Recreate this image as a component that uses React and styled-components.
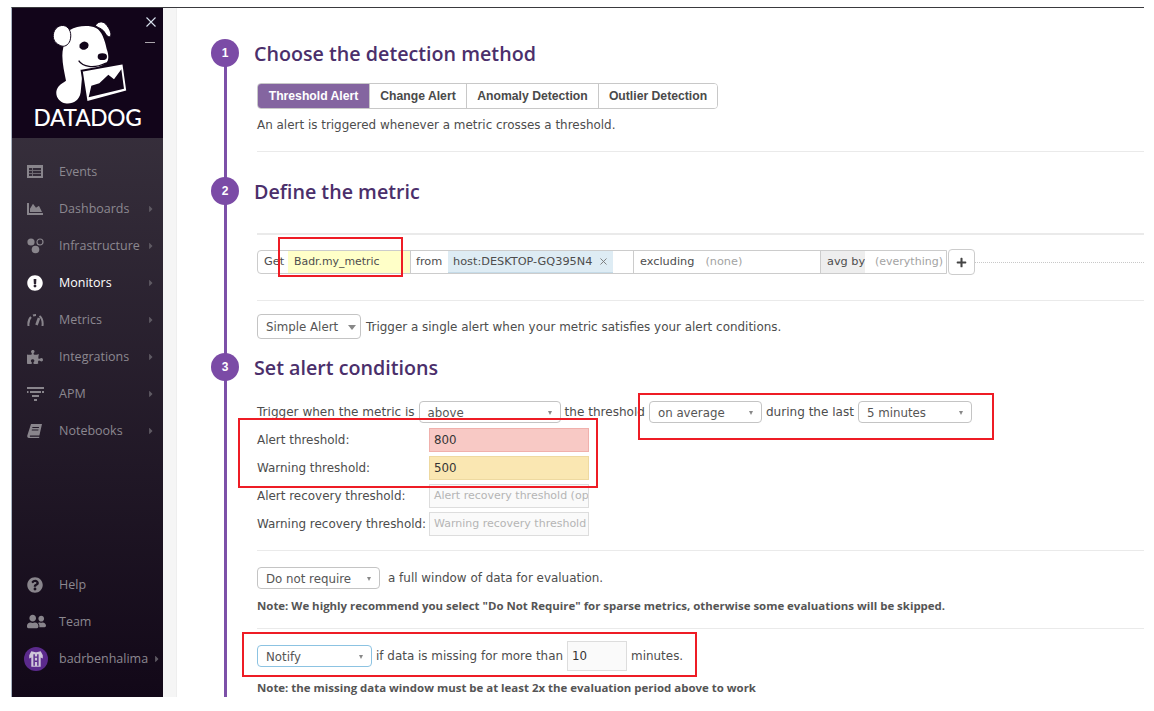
import React from 'react'
import styled, { createGlobalStyle } from 'styled-components'
import { FaChartArea, FaExclamationCircle, FaPuzzlePiece, FaQuestionCircle, FaUserFriends, FaPlus, FaCaretRight } from 'react-icons/fa'
import { X } from 'lucide-react'

const GlobalStyle = createGlobalStyle`
  html, body { margin: 0; padding: 0; background: #fff; }
  * { box-sizing: border-box; }
`

const body = `"DejaVu Sans", sans-serif`
const open = `"Open Sans", sans-serif`

const Page = styled.div`
  position: relative;
  width: 1154px;
  height: 711px;
  overflow: hidden;
  padding: 7px 10px 0 11px;
`
const Frame = styled.div`
  display: flex;
  height: 690px;
  border-top: 1px solid #3a3a3e;
  border-left: 1px solid #a9b4c2;
  overflow: hidden;
`
const Sidebar = styled.aside`
  width: 151px;
  flex: none;
  display: flex;
  flex-direction: column;
  background: linear-gradient(#3e3743, #120818);
  font-family: ${open};
`
const LogoPanel = styled.div`
  position: relative;
  height: 130px;
  flex: none;
  background: #12051a;
  display: flex;
  flex-direction: column;
  align-items: center;
  color: #fff;
`
const LogoArt = styled.svg`
  margin-top: 6px;
  align-self: flex-start;
  margin-left: 28px;
  flex: none;
`
const LogoWord = styled.div`
  font-family: "Lato", sans-serif;
  font-size: 22.7px;
  line-height: 26px;
  letter-spacing: -0.3px;
  font-weight: 500;
  margin-top: 1px;
`
const CloseMark = styled.svg`
  position: absolute;
  left: 134px;
  top: 9px;
`
const MinusLine = styled.span`
  position: absolute;
  left: 133px;
  top: 34px;
  width: 10px;
  height: 1px;
  background: #aaa6ad;
`
const NavList = styled.nav`
  padding-top: 15px;
`
const NavBottom = styled.nav`
  margin-top: auto;
  padding-bottom: 20px;
`
const NavItem = styled.div`
  position: relative;
  height: 37px;
  display: flex;
  align-items: center;
  padding-left: 15px;
  font-size: 12.5px;
  color: ${p => (p.$active ? '#fff' : '#8c8890')};
`
const NavIcon = styled.span`
  width: 32px;
  flex: none;
  display: flex;
  align-items: center;
  color: ${p => (p.$active ? '#fff' : '#89858c')};
  font-size: ${p => p.$size || 16}px;
`
const Caret = styled.span`
  margin-left: auto;
  margin-right: ${p => p.$right || 7}px;
  display: flex;
  color: #5f5a63;
  font-size: 10px;
`
const AvatarWrap = styled.span`
  width: 32px;
  flex: none;
  margin-left: -3px;
  margin-right: 3px;
  display: flex;
`
const Gutter = styled.div`
  width: 14px;
  flex: none;
  background: #f5f5f5;
  border-right: 1px solid #eee;
`
const Main = styled.main`
  position: relative;
  flex: 1;
  min-width: 0;
  padding: 31px 0 0 34px;
  font-family: ${body};
  font-size: 11.95px;
  color: #4d4d4d;
  &::before {
    content: '';
    position: absolute;
    left: 47px;
    top: 45px;
    bottom: 0;
    width: 3px;
    background: #7c50a8;
  }
`
const StepHead = styled.div`
  position: relative;
  display: flex;
  align-items: center;
  height: 28px;
  gap: 15px;
  margin-top: ${p => p.$top || 0}px;
`
const Badge = styled.span`
  width: 28px;
  height: 28px;
  border-radius: 50%;
  background: #7b4ba6;
  color: #fff;
  display: flex;
  align-items: center;
  justify-content: center;
  font: bold 12px "Liberation Sans", sans-serif;
`
const StepTitle = styled.h2`
  margin: 0;
  padding-top: 1px;
  font: 600 19.7px/28px ${open};
  color: #4b2f6b;
`
const Content = styled.div`
  padding-left: 46px;
`
const Tabs = styled.div`
  display: inline-flex;
  height: 26px;
  margin-top: 16px;
  border: 1px solid #c8c8c8;
  border-radius: 4px;
  overflow: hidden;
  vertical-align: top;
`
const Tab = styled.div`
  display: flex;
  align-items: center;
  justify-content: center;
  width: ${p => p.$w}px;
  font: bold 12.2px "Liberation Sans", sans-serif;
  color: ${p => (p.$on ? '#fff' : '#4a4a4a')};
  background: ${p => (p.$on ? '#8465a0' : '#fff')};
  & + & { border-left: 1px solid #c8c8c8; }
`
const Text = styled.div`
  margin-top: ${p => p.$top || 0}px;
  line-height: 18px;
`
const Rule = styled.hr`
  border: 0;
  margin: ${p => p.$top}px 0 0;
  height: ${p => p.$h || 1}px;
  background: #eaeaea;
`
const QueryLine = styled.div`
  display: flex;
  align-items: center;
  margin-top: 14px;
  position: relative;
  &::after {
    content: '';
    flex: 1;
    border-top: 1px dotted #c8c8c8;
  }
`
const Query = styled.div`
  display: flex;
  width: 690px;
  height: 24px;
  flex: none;
  border: 1px solid #ccc;
  border-radius: 4px 0 0 4px;
  line-height: 22px;
  font-size: 11.3px;
`
const Seg = styled.div`
  width: ${p => p.$w}px;
  flex: none;
  padding-left: ${p => p.$pad ?? 6}px;
  background: ${p => p.$bg || 'transparent'};
  color: ${p => p.$muted ? '#a3a3a3' : 'inherit'};
  font-size: ${p => p.$size ? `${p.$size}px` : 'inherit'};
  white-space: nowrap;
  overflow: hidden;
  border-right: ${p => p.$line ? '1px solid #ccc' : '0'};
  display: flex;
  align-items: center;
`
const Pill = styled.div`
  width: 165px;
  flex: none;
  padding: 0 4px 0 5px;
  background: #deecf4;
  border-bottom: 1px solid #c5dbe8;
  display: flex;
  align-items: center;
  justify-content: space-between;
  white-space: nowrap;
  svg { color: #777; }
`
const Muted = styled.span`
  color: #a3a3a3;
  margin-left: ${p => p.$left || 0}px;
`
const Grip = styled.span`
  width: 4px;
  height: 4px;
  flex: none;
  margin-left: 3px;
  background: #ccc;
`
const PlusButton = styled.div`
  width: 27px;
  height: 26px;
  flex: none;
  margin: 0 0 0 1px;
  border: 1px solid #ccc;
  border-radius: 4px;
  color: #444;
  font-size: 11px;
  display: flex;
  align-items: center;
  justify-content: center;
`
const Row = styled.div`
  display: flex;
  align-items: center;
  gap: ${p => p.$gap ?? 4}px;
  margin-top: ${p => p.$top || 0}px;
  font-size: ${p => (p.$size ? `${p.$size}px` : 'inherit')};
  white-space: nowrap;
`
const Select = styled.div`
  width: ${p => p.$w}px;
  height: ${p => p.$h || 22}px;
  flex: none;
  border: 1px solid ${p => (p.$focus ? '#8cc3e2' : '#c4c4c4')};
  border-radius: 4px;
  background: #fff;
  display: flex;
  align-items: center;
  justify-content: space-between;
  padding: 1px ${p => (p.$big ? 4 : 8)}px 0 8px;
  font-size: 11.8px;
  color: #555;
`
const Arrow = styled.span`
  width: 0;
  height: 0;
  border-style: solid;
  border-color: #888 transparent transparent;
  border-width: ${p => (p.$big ? '5px 4.5px 0' : '4px 2.5px 0')};
`
const Thresholds = styled.div`
  display: grid;
  grid-template-columns: 172px 160px;
  grid-auto-rows: 24px;
  row-gap: 4px;
  margin-top: 5px;
  align-items: center;
`
const NumberBox = styled.div`
  height: 24px;
  border: 1px solid ${p => p.$border || '#ddd'};
  background: ${p => p.$bg || '#fafafa'};
  color: ${p => (p.$hint ? '#b5b5b5' : '#333')};
  padding: 0 3px 0 4px;
  line-height: 22px;
  overflow: hidden;
  white-space: nowrap;
  font-size: ${p => (p.$hint ? 11 : 11.8)}px;
`
const SmallNumber = styled(NumberBox)`
  width: 60px;
  height: 30px;
  line-height: 28px;
  flex: none;
`
const Note = styled.div`
  margin-top: ${p => p.$top}px;
  font: bold 11.45px/16px ${open};
  color: #555;
  white-space: nowrap;
`
const Callout = styled.div`
  position: absolute;
  left: ${p => p.$x}px;
  top: ${p => p.$y}px;
  width: ${p => p.$w}px;
  height: ${p => p.$h}px;
  border: 2px solid #ee1c25;
  pointer-events: none;
`

const ink = '#12051a'

const Dog = () => (
  <LogoArt width="125" height="90" viewBox="0 0 375 270" fill="#fff">
    {/* head, neck and paw */}
    <path d="M90 48C110 36 145 32 168 42C185 50 195 80 200 105C206 120 208 140 198 146C190 154 160 168 128 168L122 235C118 262 95 272 75 268C50 262 42 235 55 218C62 208 72 205 78 200C72 170 62 130 70 100C75 78 80 60 90 48z" />
    {/* ears */}
    <path d="M40 62C42 42 60 30 76 36C90 42 96 60 90 80C85 94 72 100 62 95C48 90 38 78 40 62z" stroke={ink} strokeWidth="3" />
    <path d="M166 36C172 22 188 20 197 30C208 42 215 58 212 66C208 72 200 66 196 58C190 46 178 42 166 36z" stroke={ink} strokeWidth="3" />
    {/* eye, nose, mouth */}
    <ellipse cx="132" cy="95" rx="14" ry="12" fill={ink} transform="rotate(-20 132 95)" />
    <ellipse cx="187" cy="128" rx="14" ry="10" fill={ink} />
    <path d="M116 140C128 158 160 166 198 147" fill="none" stroke={ink} strokeWidth="4" />
    {/* chart held in the mouth */}
    <path d="M125 170L250 148L262 232L140 265z" stroke={ink} strokeWidth="6" />
    <path d="M146 250L154 215L178 208L205 182L222 196L244 166L252 224z" fill={ink} />
  </LogoArt>
)

const GridIcon = () => (
  <svg width="16" height="13" viewBox="0 0 16 13" fill="currentColor">
    <path d="M0 0h16v13H0zM2 3v8h12V3z" fillRule="evenodd" />
    <path d="M2 5h12v1H2zM2 8h12v1H2zM5 3h1v8H5z" opacity=".7" />
  </svg>
)
const ServersIcon = () => (
  <svg width="17" height="16" viewBox="0 0 17 16" fill="currentColor">
    <circle cx="4" cy="4" r="3.6" />
    <circle cx="13" cy="4" r="3" fill="none" stroke="currentColor" strokeWidth="1.2" />
    <circle cx="8.5" cy="11.5" r="3.8" />
  </svg>
)
const GaugeIcon = () => (
  <svg width="17" height="14" viewBox="0 0 17 14" fill="none" stroke="currentColor" strokeWidth="2">
    <path d="M1.5 13C1 9 2 6 4 4" />
    <path d="M6 2.5c1-.4 2-.5 3-.5" />
    <path d="M12.5 3c2.5 2 3.5 6 3 10" />
    <path d="M9.5 12L12 5" strokeWidth="2.6" />
  </svg>
)
const FilterIcon = () => (
  <svg width="17" height="14" viewBox="0 0 17 14" fill="currentColor">
    <path d="M0 0h17v2H0zM3 4h11v2H3zM0 4h1.5v2H0zM15 4h2v2h-2zM5 8h7v2H5zM7 12h3v2H7z" />
  </svg>
)
const NotebookIcon = () => (
  <svg width="15" height="14" viewBox="0 0 15 14" fill="currentColor">
    <path d="M4 0h11l-2.6 11.5H3a1 1 0 0 0 0 1.2h9.4l-.3 1.3H2C.6 14 0 12.8.3 11.5zM5.5 3l-.3 1h6.6l.3-1zM4.9 5.4l-.2 1h6.6l.2-1z" fillRule="evenodd" />
  </svg>
)
const Avatar = () => (
  <svg width="24" height="24" viewBox="0 0 23 23">
    <circle cx="11.5" cy="11.5" r="11.5" fill="#5b2a8c" />
    <path d="M7 4l4 1h1l4-1 2 4v3l-2-1v9H7v-9l-2 1V8z" fill="#cfc6da" />
    <path d="M9 7h1.4v11H9zM12.6 7H14v11h-1.4z" fill="#5b2a8c" />
    <path d="M10 9h3v1.4h-3zM10 13h3v1.4h-3z" fill="#5b2a8c" />
  </svg>
)

const mainItems = [
  { label: 'Events', icon: <GridIcon />, noCaret: true },
  { label: 'Dashboards', icon: <FaChartArea /> },
  { label: 'Infrastructure', icon: <ServersIcon /> },
  { label: 'Monitors', icon: <FaExclamationCircle />, active: true },
  { label: 'Metrics', icon: <GaugeIcon /> },
  { label: 'Integrations', icon: <FaPuzzlePiece /> },
  { label: 'APM', icon: <FilterIcon /> },
  { label: 'Notebooks', icon: <NotebookIcon /> },
]

const App = () => (
  <Page>
    <GlobalStyle />
    <Frame>
      <Sidebar>
        <LogoPanel>
          <Dog />
          <LogoWord>DATADOG</LogoWord>
          <CloseMark width="10" height="10" viewBox="0 0 10 10" stroke="#d8e2ee" strokeWidth="1.1">
            <path d="M.5.5l9 9M9.5.5l-9 9" />
          </CloseMark>
          <MinusLine />
        </LogoPanel>
        <NavList>
          {mainItems.map(item => (
            <NavItem key={item.label} $active={item.active}>
              <NavIcon $active={item.active}>{item.icon}</NavIcon>
              {item.label}
              {!item.noCaret && <Caret><FaCaretRight /></Caret>}
            </NavItem>
          ))}
        </NavList>
        <NavBottom>
          <NavItem><NavIcon><FaQuestionCircle /></NavIcon>Help</NavItem>
          <NavItem><NavIcon $size={19}><FaUserFriends /></NavIcon>Team</NavItem>
          <NavItem>
            <AvatarWrap><Avatar /></AvatarWrap>
            badrbenhalima
            <Caret $right={1}><FaCaretRight /></Caret>
          </NavItem>
        </NavBottom>
      </Sidebar>
      <Gutter />
      <Main>
        <StepHead>
          <Badge>1</Badge>
          <StepTitle>Choose the detection method</StepTitle>
        </StepHead>
        <Content>
          <Tabs>
            <Tab $on $w={111}>Threshold Alert</Tab>
            <Tab $w={97}>Change Alert</Tab>
            <Tab $w={132}>Anomaly Detection</Tab>
            <Tab $w={119}>Outlier Detection</Tab>
          </Tabs>
          <Text $top={7}>An alert is triggered whenever a metric crosses a threshold.</Text>
          <Rule $top={17} />
        </Content>
        <StepHead $top={25}>
          <Badge>2</Badge>
          <StepTitle>Define the metric</StepTitle>
        </StepHead>
        <Content>
          <Rule $top={28} $h={2} />
          <QueryLine>
            <Query>
              <Seg $w={30}>Get</Seg>
              <Seg $w={123} $bg="#ffffc8" $size={10.9} $line>Badr.my_metric</Seg>
              <Seg $w={37} $pad={5}>from</Seg>
              <Pill>host:DESKTOP-GQ395N4<X size={11} strokeWidth={2} /></Pill>
              <Seg $w={21} $line />
              <Seg $w={187} $line>excluding<Muted $left={11}>(none)</Muted></Seg>
              <Seg $w={44} $bg="#eee">avg by</Seg>
              <Seg $w={81} $pad={10} $muted $size={11}>(everything)<Grip /></Seg>
            </Query>
            <PlusButton><FaPlus /></PlusButton>
          </QueryLine>
          <Rule $top={25} />
          <Row $top={13} $gap={5}>
            <Select $w={104} $h={25} $big>Simple Alert<Arrow $big /></Select>
            Trigger a single alert when your metric satisfies your alert conditions.
          </Row>
        </Content>
        <StepHead $top={14}>
          <Badge>3</Badge>
          <StepTitle>Set alert conditions</StepTitle>
        </StepHead>
        <Content>
          <Row $top={20} $size={12.05}>
            Trigger when the metric is
            <Select $w={142}>above<Arrow /></Select>
            the threshold
            <Select $w={113}>on average<Arrow /></Select>
            during the last
            <Select $w={114}>5 minutes<Arrow /></Select>
          </Row>
          <Thresholds>
            <span>Alert threshold:</span>
            <NumberBox $bg="#f8c9c5" $border="#f0b0ac">800</NumberBox>
            <span>Warning threshold:</span>
            <NumberBox $bg="#fae7b2" $border="#eed9a0">500</NumberBox>
            <span>Alert recovery threshold:</span>
            <NumberBox $hint>Alert recovery threshold (optional)</NumberBox>
            <span>Warning recovery threshold:</span>
            <NumberBox $hint>Warning recovery threshold (optional)</NumberBox>
          </Thresholds>
          <Rule $top={14} />
          <Row $top={16} $gap={8}>
            <Select $w={123}>Do not require<Arrow /></Select>
            a full window of data for evaluation.
          </Row>
          <Note $top={9}>Note: We highly recommend you select "Do Not Require" for sparse metrics, otherwise some evaluations will be skipped.</Note>
          <Rule $top={14} />
          <Row $top={12}>
            <Select $w={115} $focus>Notify<Arrow /></Select>
            if data is missing for more than
            <SmallNumber>10</SmallNumber>
            minutes.
          </Row>
          <Note $top={9}>Note: the missing data window must be at least 2x the evaluation period above to work</Note>
        </Content>
      </Main>
    </Frame>
    <Callout $x={278} $y={237} $w={125} $h={40} />
    <Callout $x={238} $y={418} $w={360} $h={70} />
    <Callout $x={638} $y={393} $w={356} $h={47} />
    <Callout $x={242} $y={632} $w={455} $h={45} />
  </Page>
)

export default App
